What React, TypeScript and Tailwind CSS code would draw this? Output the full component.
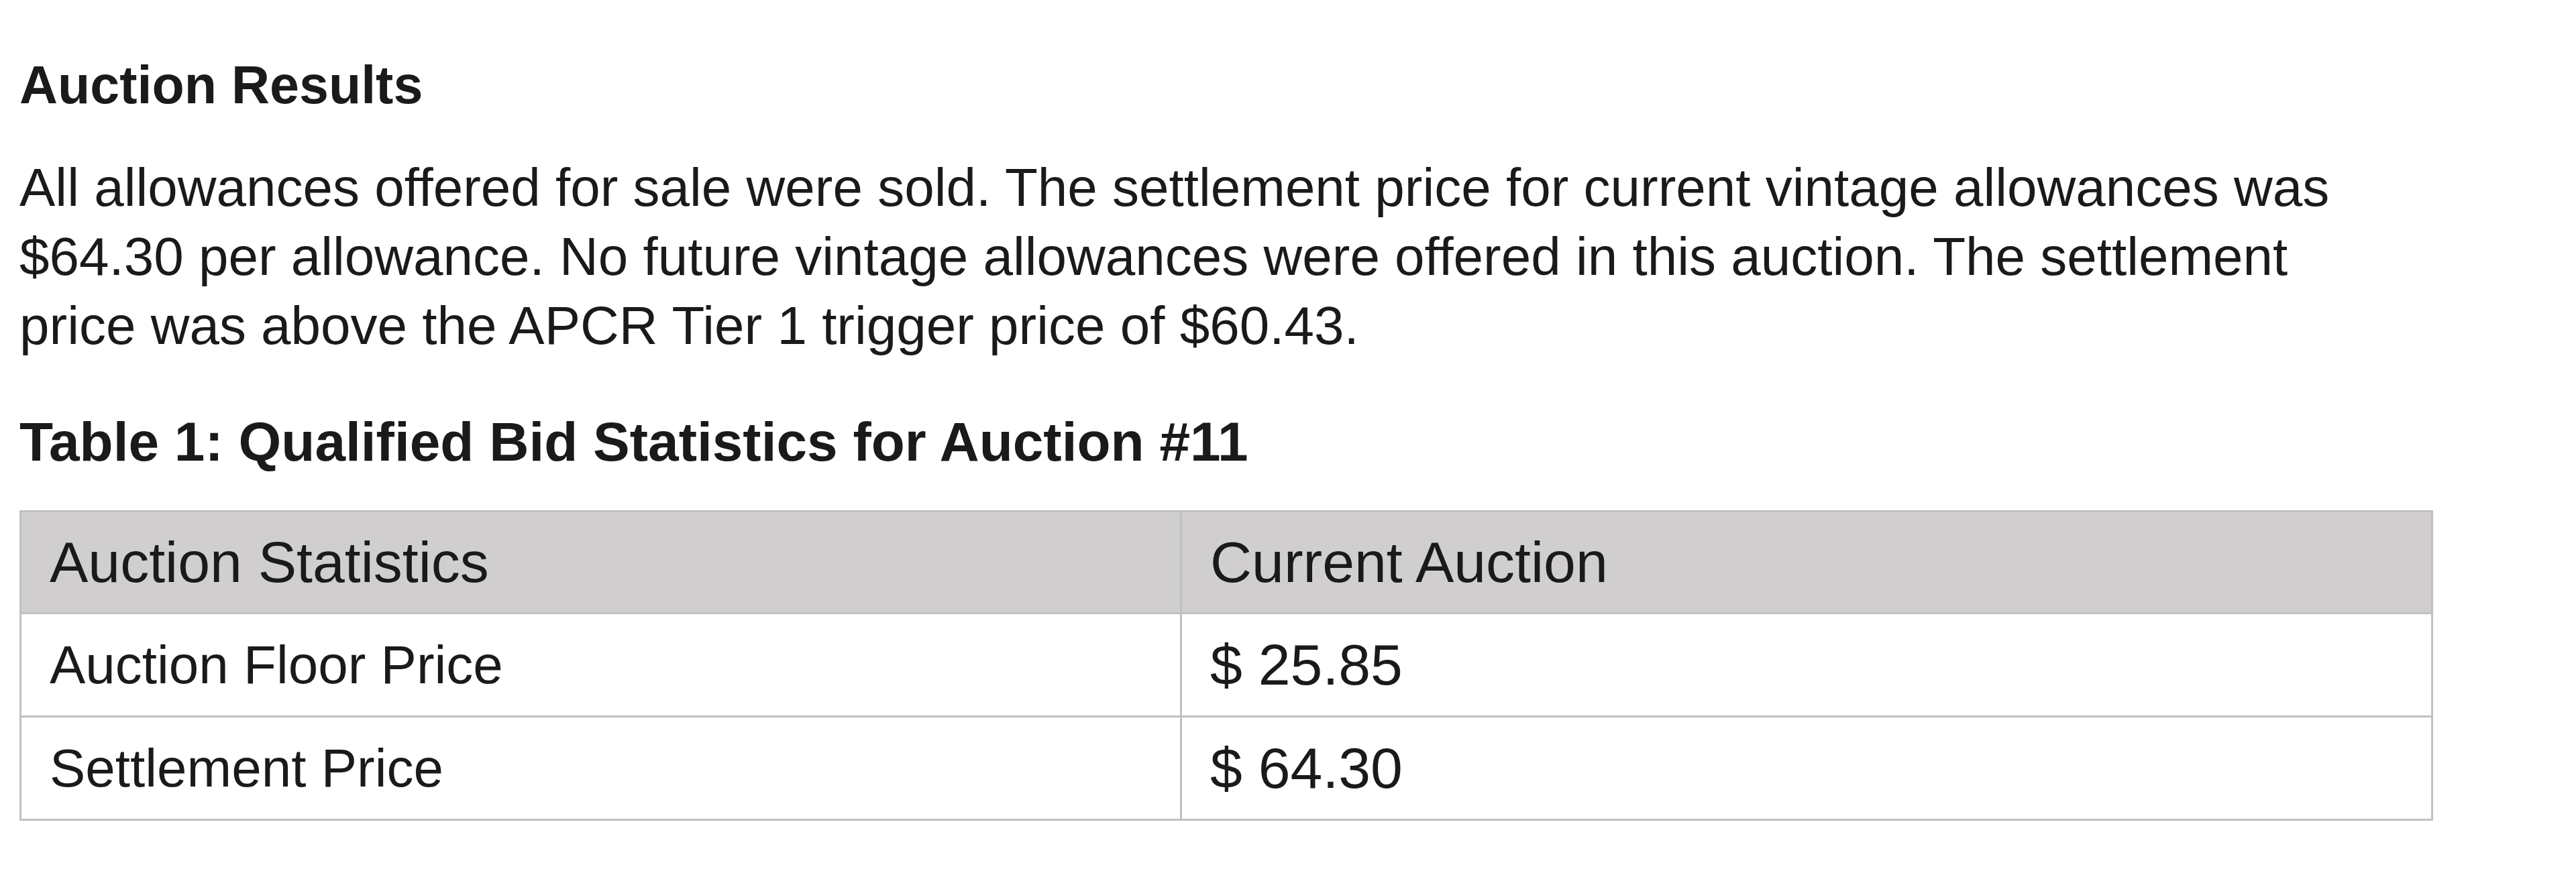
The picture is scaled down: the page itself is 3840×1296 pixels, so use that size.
const rows = [
  { label: 'Auction Floor Price', value: '$ 25.85' },
  { label: 'Settlement Price', value: '$ 64.30' },
]

const App = () => {
  return (
    <div className="min-h-[1296px] w-[3840px] bg-white pt-[77px] pl-[29px] font-['Liberation_Sans',Arial,sans-serif] text-[#1a1a1a]">
      <h2 className="text-[79px] font-semibold leading-[100px]">Auction Results</h2>
      <p className="mt-[51px] w-[3560px] text-[80px] leading-[103px]">
        All allowances offered for sale were sold. The settlement price for current vintage allowances was $64.30 per
        allowance. No future vintage allowances were offered in this auction. The settlement price was above the APCR
        Tier 1 trigger price of $60.43.
      </p>
      <h3 className="mt-[72px] text-[82px] font-semibold leading-[100px]">
        Table 1: Qualified Bid Statistics for Auction #11
      </h3>
      <table className="mt-[52px] w-[3598px] border-collapse text-[80px]">
        <thead>
          <tr className="h-[152px] bg-[#d0cece] text-[86px]">
            <th className="w-[1730px] border-[3px] border-[#c0c0c0] pl-[42px] text-left font-normal">
              Auction Statistics
            </th>
            <th className="border-[3px] border-[#c0c0c0] pl-[42px] text-left font-normal">Current Auction</th>
          </tr>
        </thead>
        <tbody>
          {rows.map((row) => (
            <tr key={row.label} className="h-[154px]">
              <td className="border-[3px] border-[#c0c0c0] pl-[42px]">{row.label}</td>
              <td className="border-[3px] border-[#c0c0c0] pl-[42px] text-[86px]">{row.value}</td>
            </tr>
          ))}
        </tbody>
      </table>
    </div>
  )
}

export default App
